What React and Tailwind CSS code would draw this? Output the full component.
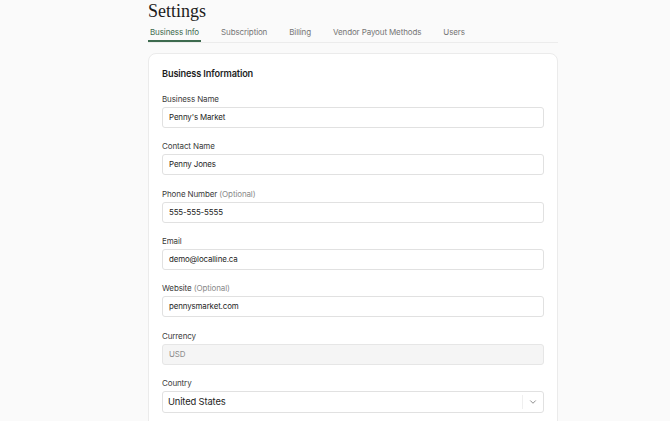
import { ChevronDown } from "lucide-react";

const tabs = ["Business Info", "Subscription", "Billing", "Vendor Payout Methods", "Users"];

const fields = [
  { label: "Business Name", value: "Penny's Market" },
  { label: "Contact Name", value: "Penny Jones" },
  { label: "Phone Number", optional: true, value: "555-555-5555" },
  { label: "Email", value: "demo@localline.ca" },
  { label: "Website", optional: true, value: "pennysmarket.com" },
  { label: "Currency", value: "USD", disabled: true },
];

const Field = ({ label, optional, value, disabled }) => (
  <div className="flex flex-col">
    <label className="pt-px text-[8px] leading-[14px] tracking-[-0.015em] text-[#3a3a3a]">
      {label}
      {optional && <span className="text-[#8a8a8a]"> (Optional)</span>}
    </label>
    <div
      className={`mt-px flex h-[21px] items-center rounded-[3px] border px-[6px] pt-px text-[7.9px] tracking-[-0.015em] ${
        disabled ? "border-[#e6e6e6] bg-[#f5f5f5] text-[#8c8c8c]" : "border-[#e1e1e1] bg-white text-[#1d1d1d]"
      }`}
    >
      {value}
    </div>
  </div>
);

const App = () => (
  <div className="min-h-[421px] bg-[#fafafa] font-['Inter',sans-serif]">
    <div className="ml-[148px] w-[410px]">
      <h1 className="font-['Liberation_Serif',serif] text-[18px] leading-[22px] text-[#1c1c1c]">Settings</h1>

      <nav className="flex gap-[18px] border-b border-[#ececec]">
        {tabs.map((tab, i) => (
          <button
            key={tab}
            className={`border-b-2 px-[2px] pt-[4px] pb-[2px] text-[8px] leading-[12px] tracking-[-0.015em] ${
              i === 0 ? "border-[#3e6b4f] text-[#3e6b4f]" : "border-transparent text-[#767676]"
            }`}
          >
            {tab}
          </button>
        ))}
      </nav>

      <section className="mt-[10px] rounded-lg border border-[#ebebeb] bg-white px-[13px] pt-[12px] pb-6">
        <h2 className="text-[9.2px] leading-[16px] font-semibold tracking-[-0.015em] text-[#1e1e1e]">
          Business Information
        </h2>

        <div className="mt-[9px] flex flex-col gap-[10.33px]">
          {fields.map((f) => (
            <Field key={f.label} {...f} />
          ))}

          <div className="flex flex-col">
            <label className="pt-px text-[8px] leading-[14px] tracking-[-0.015em] text-[#3a3a3a]">Country</label>
            <div className="mt-px flex h-[22px] items-center rounded-[3px] border border-[#e1e1e1] bg-white pt-px text-[9.4px] tracking-[-0.015em] text-[#1d1d1d]">
              <span className="flex-1 px-[5px]">United States</span>
              <span className="h-[14px] w-px bg-[#efefef]" />
              <span className="flex w-[20px] justify-center text-[#777]">
                <ChevronDown size={10} strokeWidth={2} />
              </span>
            </div>
          </div>
        </div>
      </section>
    </div>
  </div>
);

export default App;
